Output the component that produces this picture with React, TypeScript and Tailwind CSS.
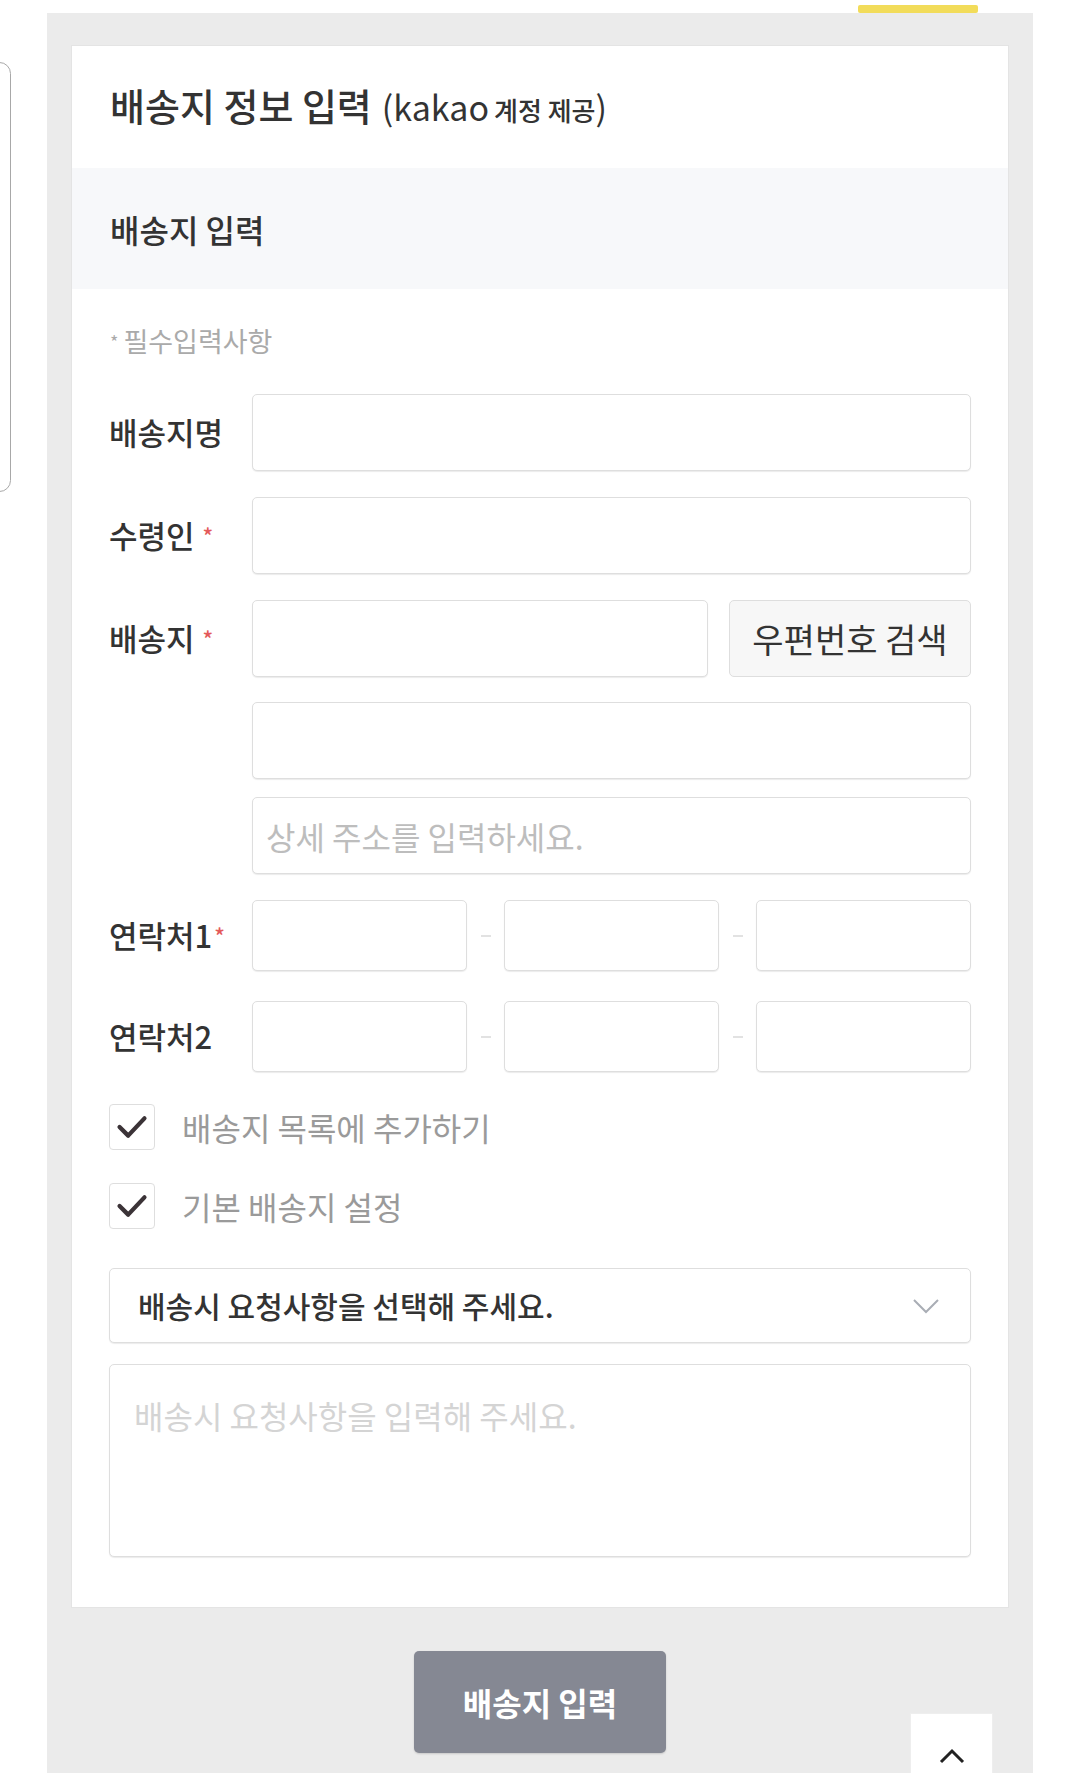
import React from "react";

const font = { fontFamily: '"Noto Sans CJK KR", "Noto Sans", sans-serif' };

function Field({ className = "" }: { className?: string }) {
  return (
    <div
      className={`bg-white border-[1.5px] border-[#dedede] rounded-[5px] shadow-[0_1px_1px_rgba(0,0,0,0.08)] ${className}`}
    />
  );
}

function Label({ text, required }: { text: string; required?: boolean }) {
  return (
    <div className="w-[143px] shrink-0 flex items-center text-[31px] font-medium text-[#333]">
      <span>{text}</span>
      {required && <span className="ml-[8px] text-[22px] text-[#e45a5a]">*</span>}
    </div>
  );
}

function Check({ label }: { label: string }) {
  return (
    <div className="flex items-center gap-[27px]">
      <div className="w-[46px] h-[46px] bg-white border-[1.5px] border-[#dedede] rounded-[4px] flex items-center justify-center">
        <svg width="46" height="46" viewBox="0 0 46 46">
          <path d="M10 23 L19 32 L36 14" fill="none" stroke="#3b3337" strokeWidth="4.5" strokeLinecap="round" strokeLinejoin="round" />
        </svg>
      </div>
      <span className="text-[32px] text-[#9a9a9a]">{label}</span>
    </div>
  );
}

function Phone({ label, required }: { label: string; required?: boolean }) {
  return (
    <div className="flex items-stretch h-[71px]">
      <div className="w-[143px] shrink-0 flex items-center text-[31px] font-medium text-[#333]">
        <span>{label}</span>
        {required && <span className="ml-[2px] text-[22px] text-[#e45a5a]">*</span>}
      </div>
      <div className="flex-1 flex items-center">
        <Field className="flex-1 h-full" />
        <div className="w-[37px] flex justify-center">
          <div className="w-[10px] h-[2px] bg-[#e2e2e2]" />
        </div>
        <Field className="flex-1 h-full" />
        <div className="w-[37px] flex justify-center">
          <div className="w-[10px] h-[2px] bg-[#e2e2e2]" />
        </div>
        <Field className="flex-1 h-full" />
      </div>
    </div>
  );
}

export default function App() {
  return (
    <div className="relative w-[1080px] h-[1773px] overflow-hidden bg-white" style={font}>
      {/* yellow tab marker */}
      <div className="absolute left-[858px] top-[5px] w-[120px] h-[8px] bg-[#f2dc5a] rounded-[2px]" />
      {/* left edge handle */}
      <div className="absolute left-[-12px] top-[62px] w-[23px] h-[430px] border border-[#a8a8a8] rounded-[12px]" />

      <div className="ml-[47px] mt-[13px] w-[986px] h-[1760px] bg-[#ebebeb] px-[24px] pt-[32px]">
        <div className="bg-white border border-[#e4e4e4]">
          <div className="h-[122px] flex items-baseline pt-[40px] pl-[38px] text-[#333]">
            <span className="text-[38px] font-medium leading-none">배송지 정보 입력</span>
            <span className="text-[34px] ml-[10px] leading-none">(kakao</span>
            <span className="text-[26px] font-medium ml-[5px] leading-none">계정 제공</span>
            <span className="text-[34px] leading-none">)</span>
          </div>
          <div className="h-[121px] bg-[#f7f8fa] flex items-center pl-[38px] text-[32px] font-medium text-[#333]">
            배송지 입력
          </div>

          <div className="px-[37px] pb-[50px]">
            <div className="h-[105px] flex items-center pl-[1px] text-[27px] text-[#aaa]">
              <span className="text-[18px] mr-[5px]">*</span>필수입력사항
            </div>

            <div className="flex flex-col">
              <div className="flex h-[77px]">
                <Label text="배송지명" />
                <Field className="flex-1" />
              </div>
              <div className="flex h-[77px] mt-[26px]">
                <Label text="수령인" required />
                <Field className="flex-1" />
              </div>
              <div className="flex h-[77px] mt-[26px]">
                <Label text="배송지" required />
                <Field className="flex-1" />
                <button className="ml-[21px] w-[242px] bg-[#f7f7f7] border-[1.5px] border-[#dedede] rounded-[5px] text-[34px] text-[#333]">
                  우편번호 검색
                </button>
              </div>
              <div className="flex h-[77px] mt-[25px]">
                <div className="w-[143px] shrink-0" />
                <Field className="flex-1" />
              </div>
              <div className="flex h-[77px] mt-[18px]">
                <div className="w-[143px] shrink-0" />
                <div className="flex-1 bg-white border-[1.5px] border-[#dedede] rounded-[5px] shadow-[0_1px_1px_rgba(0,0,0,0.08)] flex items-center pl-[13px] text-[32px] text-[#bdbdbd]">
                  상세 주소를 입력하세요.
                </div>
              </div>
              <div className="mt-[26px]">
                <Phone label="연락처1" required />
              </div>
              <div className="mt-[30px]">
                <Phone label="연락처2" />
              </div>

              <div className="mt-[31px] flex flex-col gap-[31px]">
                <Check label="배송지 목록에 추가하기" />
                <Check label="기본 배송지 설정" />
              </div>

              <div className="mt-[38px] h-[75px] bg-white border-[1.5px] border-[#dedede] rounded-[5px] shadow-[0_1px_1px_rgba(0,0,0,0.08)] flex items-center justify-between pl-[28px] pr-[30px]">
                <span className="text-[30px] font-medium text-[#333]">배송시 요청사항을 선택해 주세요.</span>
                <svg width="28" height="16" viewBox="0 0 28 16">
                  <path d="M2 2 L14 14 L26 2" fill="none" stroke="#a9adb5" strokeWidth="2" />
                </svg>
              </div>

              <div className="mt-[21px] h-[193px] bg-white border-[1.5px] border-[#dedede] rounded-[5px] shadow-[0_1px_1px_rgba(0,0,0,0.08)] pl-[24px] pt-[26px] text-[32px] text-[#d4d4d4]">
                배송시 요청사항을 입력해 주세요.
              </div>
            </div>
          </div>
        </div>

        <div className="flex justify-center mt-[43px]">
          <button className="w-[252px] h-[102px] bg-[#858893] rounded-[5px] text-white text-[32px] font-bold shadow-[0_1px_2px_rgba(0,0,0,0.15)]">
            배송지 입력
          </button>
        </div>
      </div>

      {/* scroll to top */}
      <div className="absolute left-[910px] top-[1713px] w-[83px] h-[80px] bg-white border border-[#eeeeee] flex justify-center pt-[34px]">
        <svg width="26" height="16" viewBox="0 0 26 16">
          <path d="M2 14 L13 3 L24 14" fill="none" stroke="#222" strokeWidth="3" />
        </svg>
      </div>
    </div>
  );
}
